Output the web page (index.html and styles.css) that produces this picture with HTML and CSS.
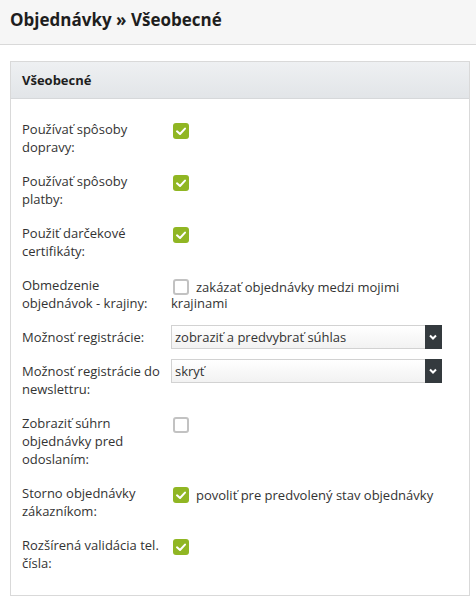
FILE: index.html
```html
<!DOCTYPE html>
<html lang="sk">
<head>
<meta charset="utf-8">
<link rel="stylesheet" href="styles.css">
</head>
<body>
<header class="page-head"><h1>Objednávky » Všeobecné</h1></header>
<section class="panel">
  <div class="panel-head">Všeobecné</div>
  <div class="panel-body">
    <div class="row">
      <div class="label">Používať spôsoby dopravy:</div>
      <div class="ctrl"><span class="cb on"><svg viewBox="0 0 16 16"><polyline points="4,8.3 7,11 12,5.6"/></svg></span></div>
    </div>
    <div class="row">
      <div class="label">Používať spôsoby platby:</div>
      <div class="ctrl"><span class="cb on"><svg viewBox="0 0 16 16"><polyline points="4,8.3 7,11 12,5.6"/></svg></span></div>
    </div>
    <div class="row">
      <div class="label">Použiť darčekové certifikáty:</div>
      <div class="ctrl"><span class="cb on"><svg viewBox="0 0 16 16"><polyline points="4,8.3 7,11 12,5.6"/></svg></span></div>
    </div>
    <div class="row">
      <div class="label">Obmedzenie objednávok - krajiny:</div>
      <div class="ctrl"><p class="inline-text"><span class="cb"></span>zakázať objednávky medzi mojimi krajinami</p></div>
    </div>
    <div class="row row-select">
      <div class="label">Možnosť registrácie:</div>
      <div class="ctrl"><div class="select"><span class="val">zobraziť a predvybrať súhlas</span><span class="arrow"><svg viewBox="0 0 16 24"><polyline points="5,10.5 8,13.5 11,10.5"/></svg></span></div></div>
    </div>
    <div class="row row-select">
      <div class="label">Možnosť registrácie do newslettru:</div>
      <div class="ctrl"><div class="select"><span class="val">skryť</span><span class="arrow"><svg viewBox="0 0 16 24"><polyline points="5,10.5 8,13.5 11,10.5"/></svg></span></div></div>
    </div>
    <div class="row">
      <div class="label">Zobraziť súhrn objednávky pred odoslaním:</div>
      <div class="ctrl"><span class="cb"></span></div>
    </div>
    <div class="row">
      <div class="label">Storno objednávky zákazníkom:</div>
      <div class="ctrl"><p class="inline-text"><span class="cb on"><svg viewBox="0 0 16 16"><polyline points="4,8.3 7,11 12,5.6"/></svg></span>povoliť pre predvolený stav objednávky</p></div>
    </div>
    <div class="row">
      <div class="label">Rozšírená validácia tel. čísla:</div>
      <div class="ctrl"><span class="cb on"><svg viewBox="0 0 16 16"><polyline points="4,8.3 7,11 12,5.6"/></svg></span></div>
    </div>
  </div>
</section>
</body>
</html>
```
FILE: styles.css
```css
* { box-sizing: border-box; }
html, body { margin: 0; padding: 0; background: #fff; }
body {
  font-family: "Open Sans", "Liberation Sans", sans-serif;
  font-size: 13px;
  color: #333;
}
.page-head {
  height: 45px;
  background: #f6f6f6;
  border-bottom: 1px solid #d9d9d9;
  padding: 0 10px;
}
.page-head h1 {
  margin: 0;
  font-size: 17px;
  font-weight: 700;
  line-height: 40px;
  color: #1e1e1e;
}
.panel {
  width: 460px;
  margin: 16px 0 0 10px;
  border: 1px solid #d9d9d9;
}
.panel-head {
  height: 37px;
  background: linear-gradient(#eef0f2, #e2e5e8);
  border-bottom: 1px solid #d6d8da;
  padding: 0 11px;
  font-weight: 700;
  line-height: 36px;
  color: #1e1e1e;
}
.panel-body {
  padding: 18px 0 10px 11px;
}
.row {
  display: grid;
  grid-template-columns: 149px 271px;
  margin-bottom: 13px;
}
.row-select { margin-bottom: 10px; }
.row-select + .row-select { margin-bottom: 13px; }
.label {
  padding: 3px 9px 0 0;
  line-height: 18px;
}
.ctrl {
  padding-top: 6px;
  line-height: 16px;
  color: #333;
}
.inline-text {
  margin: 0;
}
.row-select .ctrl { padding-top: 0; }
.cb {
  display: inline-block;
  vertical-align: top;
  width: 16px;
  height: 16px;
  margin: 0 7px 0 2px;
  border: 2px solid #c2c2c2;
  border-radius: 3px;
  background: #fff;
}
.cb.on {
  border: none;
  background: #90b623;
}
.cb svg { display: block; width: 16px; height: 16px; }
.cb svg polyline {
  fill: none;
  stroke: #fff;
  stroke-width: 2;
  stroke-linecap: round;
  stroke-linejoin: round;
}
.select {
  display: flex;
  height: 24px;
  border: 1px solid #d2d2d2;
  background: linear-gradient(#ffffff, #f2f2f2);
}
.select .val {
  flex: 1;
  padding-left: 3px;
  line-height: 22px;
  color: #333;
}
.select .arrow {
  width: 17px;
  margin: -1px -1px -1px 0;
  background: #343a3e;
}
.select .arrow svg { display: block; width: 16px; height: 24px; }
.select .arrow polyline {
  fill: none;
  stroke: #fff;
  stroke-width: 2;
}
```
